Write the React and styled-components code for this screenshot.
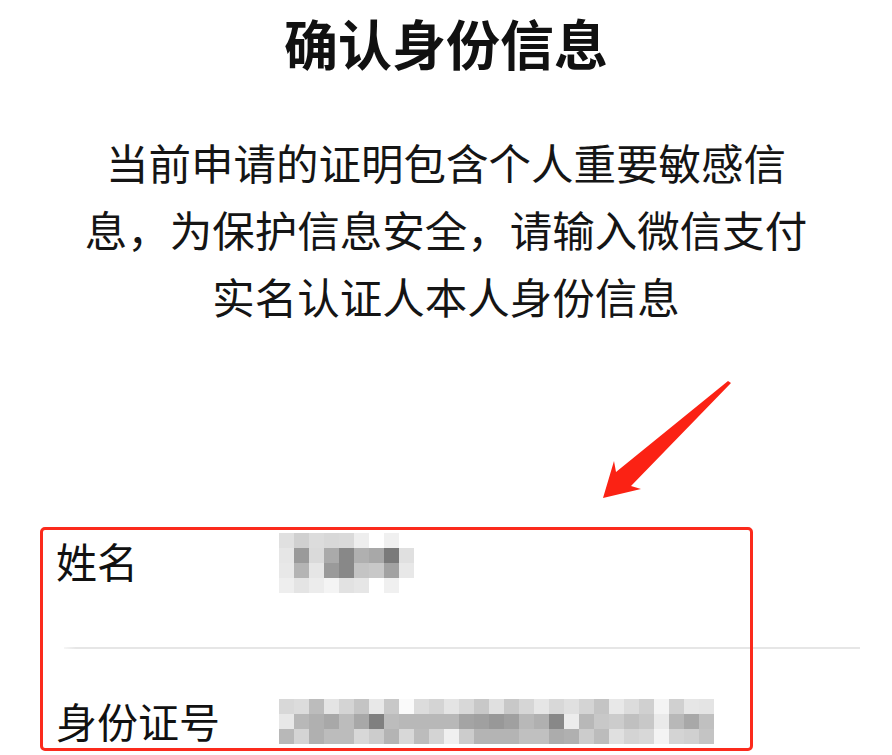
import React from 'react';
import styled, { createGlobalStyle } from 'styled-components';

const GlobalStyle = createGlobalStyle`
  html, body {
    margin: 0;
    padding: 0;
    background: #fff;
  }
  body {
    font-family: "Noto Sans CJK SC", "Noto Sans", sans-serif;
    color: #111;
  }
`;

const Page = styled.main`
  position: relative;
  width: 892px;
  height: 755px;
  overflow: hidden;
  background: #fff;
`;

const Title = styled.h1`
  margin: 0;
  padding-top: 11px;
  font-size: 54px;
  font-weight: 700;
  line-height: 64px;
  text-align: center;
  color: #111;
`;

const Notice = styled.p`
  margin: 53px 0 0;
  font-size: 42.5px;
  font-weight: 400;
  line-height: 67px;
  text-align: center;
  color: #151515;
`;

const Form = styled.section`
  margin-top: 171px;
`;

const Row = styled.div`
  display: flex;
  align-items: center;
  height: 60px;
  padding: ${props => props.$pad};
  padding-left: 56px;
`;

const Label = styled.span`
  flex: 0 0 223px;
  font-size: 41px;
  line-height: 60px;
  color: #111;
`;

const Divider = styled.div`
  height: 2px;
  margin: 0 32px 0 64px;
  background: linear-gradient(to right, #f6f6f6, #e6e6e6 12px);
`;

const Mosaic = styled.div`
  display: grid;
  grid-template-columns: repeat(${props => props.$cols}, 15px);
  grid-auto-rows: 15px;
  transform: translateY(${props => props.$shift || 0}px);
`;

const Cell = styled.span.attrs(props => ({
  style: { background: '#' + props.$shade.repeat(3) },
}))`
  display: block;
`;

const Highlight = styled.div`
  position: absolute;
  left: 40px;
  top: 527px;
  width: 713px;
  height: 224px;
  box-sizing: border-box;
  border: 3px solid #fb2a1c;
  border-radius: 5px;
  pointer-events: none;
`;

const Arrow = styled.svg`
  position: absolute;
  left: 595px;
  top: 375px;
  width: 145px;
  height: 130px;
`;

const nameShades = [
  ['e0', 'd0', 'dc', 'd8', 'da', 'ee', 'ff', 'f0', 'ff'],
  ['e6', '9a', 'da', 'aa', '88', 'b0', 'a8', '7a', 'e0'],
  ['e8', 'b4', 'e6', '9a', '88', 'c4', 'c8', 'a2', 'e8'],
  ['ee', 'e4', 'ec', 'f4', 'e2', 'e6', 'ff', 'f0', 'ff'],
];

const idShades = [
  ['d8', 'dc', 'bc', 'e4', 'd4', 'c4', 'e8', 'c8', 'fa', 'dc', 'd4', 'e4', 'd8', 'c8', 'e0',
    'c8', 'd6', 'e6', 'd8', 'e0', 'd4', 'c4', 'e8', 'dc', 'd0', 'f4', 'd0', 'e6', 'e4'],
  ['e8', 'b8', 'b0', 'a8', 'bc', 'a8', '80', 'bc', 'b8', 'b8', 'b8', 'b8', 'a4', 'a0', '98',
    'a0', 'b8', 'b0', '88', 'ec', 'b8', 'c8', 'cc', 'c0', 'c8', 'ea', 'b8', 'a8', 'c0'],
  ['b8', 'd4', 'b0', 'bc', 'bc', 'd8', 'cc', 'b4', 'd8', 'bc', 'd4', 'f0', 'cc', 'b4', 'b4',
    'b4', 'c0', 'c0', 'ac', 'b0', 'cc', 'bc', 'e0', 'd4', 'd8', 'f4', 'd4', 'd0', 'c4'],
];

function Blurred({ shades, shift }) {
  return (
    <Mosaic $cols={shades[0].length} $shift={shift}>
      {shades.map((row, r) =>
        row.map((shade, c) => <Cell key={r + '-' + c} $shade={shade} />)
      )}
    </Mosaic>
  );
}

export default function App() {
  return (
    <>
      <GlobalStyle />
      <Page>
        <Title>确认身份信息</Title>
        <Notice>
          当前申请的证明包含个人重要敏感信
          <br />
          息，为保护信息安全，请输入微信支付
          <br />
          实名认证人本人身份信息
        </Notice>

        <Form>
          <Row $pad="30px 0 57px">
            <Label>姓名</Label>
            <Blurred shades={nameShades} shift={3} />
          </Row>
          <Divider />
          <Row $pad="41px 0 0">
            <Label>身份证号</Label>
            <Blurred shades={idShades} shift={1} />
          </Row>
        </Form>

        <Highlight />
        <Arrow viewBox="0 0 145 130">
          <polygon
            fill="#fb2214"
            points="133,6 136,8 36,111 46,114 8,123 19,86 21,97"
          />
        </Arrow>
      </Page>
    </>
  );
}
